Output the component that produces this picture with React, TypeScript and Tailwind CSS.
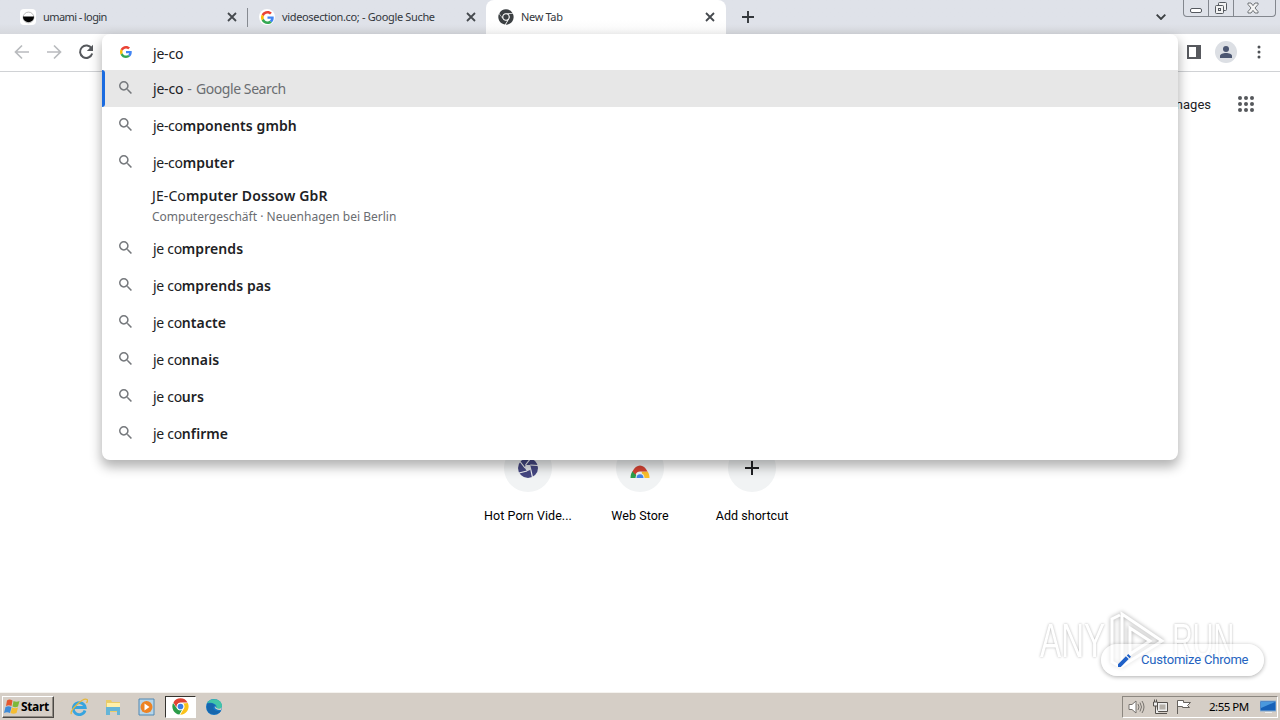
import React from "react";

const sans = "font-['Noto_Sans','Liberation_Sans',sans-serif]";

function GoogleG({ className }: { className: string }) {
  return (
    <svg viewBox="0 0 48 48" className={className}>
      <path fill="#EA4335" d="M24 9.5c3.54 0 6.71 1.22 9.21 3.6l6.85-6.85C35.9 2.38 30.47 0 24 0 14.62 0 6.51 5.38 2.56 13.22l7.98 6.19C12.43 13.72 17.74 9.5 24 9.5z" />
      <path fill="#4285F4" d="M46.98 24.55c0-1.57-.15-3.09-.38-4.55H24v9.02h12.94c-.58 2.96-2.26 5.48-4.78 7.18l7.73 6c4.51-4.18 7.09-10.36 7.09-17.65z" />
      <path fill="#FBBC05" d="M10.53 28.59c-.48-1.45-.76-2.99-.76-4.59s.27-3.14.76-4.59l-7.98-6.19C.92 16.46 0 20.12 0 24c0 3.88.92 7.54 2.56 10.78l7.97-6.19z" />
      <path fill="#34A853" d="M24 48c6.48 0 11.93-2.13 15.89-5.81l-7.73-6c-2.15 1.45-4.92 2.3-8.16 2.3-6.26 0-11.57-4.22-13.47-9.91l-7.98 6.19C6.51 42.62 14.62 48 24 48z" />
    </svg>
  );
}

function Cross() {
  return (
    <svg viewBox="0 0 10 10" className="size-[10px] shrink-0" stroke="#45494e" strokeWidth="1.8">
      <path d="M1 1l8 8M9 1L1 9" />
    </svg>
  );
}

function Lens() {
  return (
    <svg viewBox="3 3 17.5 17.5" className="size-[13px] shrink-0" fill="#75787c">
      <path d="M15.5 14h-.79l-.28-.27A6.471 6.471 0 0 0 16 9.5 6.5 6.5 0 1 0 9.5 16c1.61 0 3.09-.59 4.23-1.57l.27.28v.79l5 4.99L20.49 19l-4.99-5zm-6 0C7.01 14 5 11.99 5 9.5S7.01 5 9.5 5 14 7.01 14 9.5 11.99 14 9.5 14z" />
    </svg>
  );
}

function ChromeMark({ className, mono = false }: { className: string; mono?: boolean }) {
  const c = mono ? ["#3c4043", "#3c4043", "#3c4043"] : ["#e04434", "#fbc21a", "#2b9c49"];
  return (
    <svg viewBox="0 0 24 24" className={className}>
      <circle cx="12" cy="12" r="11.5" fill="#fff" />
      <path fill={c[0]} d="M2 6.2A11.5 11.5 0 0 1 22 6.5H12A5.5 5.5 0 0 0 6.6 13.6z" />
      <path fill={c[1]} d="M22.3 7A11.5 11.5 0 0 1 11.6 23.5L17 14.5A5.5 5.5 0 0 0 15.6 7.9z" />
      <path fill={c[2]} d="M1.5 7.2A11.5 11.5 0 0 0 10.4 23.4L14 17.1A5.5 5.5 0 0 1 7 14.8z" />
      <circle cx="12" cy="12" r="5" fill="#fff" />
      <circle cx="12" cy="12" r="4" fill={mono ? "#3c4043" : "#3b7de4"} />
    </svg>
  );
}

function TabStrip() {
  return (
    <div className="flex h-[34px] shrink-0 bg-linear-to-b from-[#dfe2e9] from-70% to-[#d6d8dd] text-[11px] text-[#33373c]">
      <div className="flex w-[247px] items-center pr-[10px] pl-5">
        <span className="flex size-4 shrink-0 items-center justify-center rounded-sm bg-white">
          <svg viewBox="0 0 14 14" className="size-[13px]">
            <circle cx="7" cy="7" r="5.8" fill="#fff" stroke="#999" strokeWidth=".7" />
            <path d="M1 6h12a6 6 0 0 1-12 0z" fill="#050505" />
          </svg>
        </span>
        <span className="ml-[7px] flex-1 whitespace-nowrap tracking-[-0.6px]">umami - login</span>
        <Cross />
      </div>
      <div className="mt-2 h-[19px] w-px bg-[#868a91]" />
      <div className="flex w-[238px] items-center rounded-br-[8px] pr-[10px] pl-[11px]">
        <span className="flex size-4 shrink-0 items-center justify-center rounded-full bg-white">
          <GoogleG className="size-[13px]" />
        </span>
        <span className="ml-[7px] flex-1 whitespace-nowrap tracking-[-0.34px]">videosection.co; - Google Suche</span>
        <Cross />
      </div>
      <div className="flex w-[240px] items-center rounded-t-[8px] bg-linear-to-b from-white from-60% to-[#f8f8f8] pr-[11px] pl-[12px]">
        <ChromeMark mono className="size-[16px] shrink-0" />
        <span className="ml-[7px] flex-1 tracking-[-0.35px]">New Tab</span>
        <Cross />
      </div>
      <div className="flex w-[44px] items-center justify-center">
        <svg viewBox="0 0 12 12" className="size-3" stroke="#33373b" strokeWidth="1.9"><path d="M6 0v12M0 6h12" /></svg>
      </div>
      <div className="flex flex-1 items-center justify-end pr-[17px]">
        <svg viewBox="0 0 10 6" className="h-[6px] w-[10px]" fill="none" stroke="#3c4043" strokeWidth="1.9"><path d="M.7.7L5 5 9.3.7" /></svg>
      </div>
      <div className="mr-[4px] flex h-[17px] w-[93px] rounded-b-[4px] border border-t-0 border-[#83878e]">
        <div className="flex w-[25px] items-end justify-center border-r border-[#83878e] pb-[3px]">
          <div className="h-[5px] w-[12px] rounded-xs border border-[#55595f] bg-white" />
        </div>
        <div className="flex w-[25px] items-center justify-center border-r border-[#83878e]">
          <svg viewBox="0 0 14 14" className="size-[14px]" fill="#f2f2f2" stroke="#55595f"><rect x="4.5" y="1.500" width="8" height="8" rx="1" /><rect x="1.500" y="4.500" width="8" height="8" rx="1" /><rect x="4.500" y="7.500" width="2" height="2" /></svg>
        </div>
        <div className="flex flex-1 items-center justify-center pr-[3px]">
          <svg viewBox="0 0 12 12" className="size-[12px]" fill="#f4f4f4" stroke="#606469" strokeWidth=".9"><path d="M1 1h3l2 2.6L8 1h3v1.500L8 6l3 3.500V11H8L6 8.400 4 11H1V9.500L4 6 1 2.500z" /></svg>
        </div>
      </div>
    </div>
  );
}

function Toolbar() {
  return (
    <div className="flex h-[38px] shrink-0 items-center border-b border-[#d0d2d5] bg-white pr-[15px] pb-px pl-[14px]">
      <svg viewBox="0 0 16 16" className="size-4" fill="none" stroke="#b9bbbe" strokeWidth="1.7"><path d="M15 8H2M8 1.500L1.500 8 8 14.500" /></svg>
      <svg viewBox="0 0 16 16" className="ml-4 size-4" fill="none" stroke="#b9bbbe" strokeWidth="1.7"><path d="M1 8h13M8 1.500L14.500 8 8 14.500" /></svg>
      <svg viewBox="0 0 16 16" className="ml-4 size-4" fill="none" stroke="#55585c" strokeWidth="2"><path d="M13.600 4.600A6.200 6.200 0 1 0 14.200 9.500" /><path d="M15 .8v6.200H8.800z" fill="#55585c" stroke="none" /></svg>
      <div className="flex-1" />
      <svg viewBox="0 0 14 14" className="h-[14px] w-[14px]"><path d="M0 0h14v14H0zM2 2v10h7V2z" fill="#57595e" fillRule="evenodd" /></svg>
      <span className="ml-[14px] flex size-[22px] items-center justify-center rounded-full bg-[#dcdfe4]">
        <svg viewBox="0 0 12 12" className="size-3" fill="#4b5671"><circle cx="6" cy="3" r="3" /><path d="M0 12V10c0-2 3-3 6-3s6 1 6 3v2z" /></svg>
      </span>
      <svg viewBox="0 0 4 14" className="mr-[4px] ml-[20px] h-[14px] w-[4px]" fill="#4e5155"><circle cx="2" cy="2" r="1.500" /><circle cx="2" cy="7" r="1.500" /><circle cx="2" cy="12" r="1.500" /></svg>
    </div>
  );
}

const dashed = [
  { light: "je-co", bold: "mponents gmbh" },
  { light: "je-co", bold: "mputer" },
];
const spaced = [
  { light: "je co", bold: "mprends" },
  { light: "je co", bold: "mprends pas" },
  { light: "je co", bold: "ntacte" },
  { light: "je co", bold: "nnais" },
  { light: "je co", bold: "urs" },
  { light: "je co", bold: "nfirme" },
];

function Match({ light, bold }: { light: string; bold: string }) {
  return (
    <div className="flex h-[37px] items-center pb-[2px] pl-[17px]">
      <Lens />
      <span className="ml-[21px] pt-[2px] text-[14px] whitespace-pre text-[#202124]">
        <span className="tracking-[-0.3px]">{light}</span>
        <span className="font-semibold tracking-[0.08px]">{bold}</span>
      </span>
    </div>
  );
}

function Suggestions() {
  return (
    <div className="absolute top-[34px] left-[102px] h-[426px] w-[1076px] rounded-[8px] bg-white shadow-[0_6px_12px_1px_rgba(0,0,0,0.30)]">
      <div className="flex h-[36px] items-center pl-[18px]">
        <GoogleG className="size-[12px]" />
        <span className="ml-[21px] pt-[2px] text-[14px] tracking-[-0.2px] text-[#202124]">je-co</span>
      </div>
      <div className="flex h-[37px] items-center bg-[#e7e7e7] pb-[2px]">
        <div className="mt-[2px] h-[37px] w-[3px] rounded-r-sm bg-[#1a6be0]" />
        <div className="w-[14px]" />
        <Lens />
        <span className="ml-[21px] pt-[2px] text-[14px] whitespace-pre text-[#202124]">
          <span className="tracking-[-0.2px]">je-co</span>
          <span className="tracking-[0.3px] text-[#6a6d71]"> - </span>
          <span className="tracking-[-0.42px] text-[#6a6d71]">Google Search</span>
        </span>
      </div>
      {dashed.map((m) => <Match key={m.bold} light={m.light} bold={m.bold} />)}
      <div className="flex h-[49px] flex-col pt-[4px] pl-[50px]">
        <span className="text-[14px] leading-[22px] text-[#202124]">
          <span className="tracking-[0.1px]">JE-Co</span>
          <span className="font-semibold tracking-[0.16px]">mputer Dossow GbR</span>
        </span>
        <span className="text-[12px] leading-[19px] text-[#6a6d71]">Computergeschäft · Neuenhagen bei Berlin</span>
      </div>
      {spaced.map((m) => <Match key={m.bold} light={m.light} bold={m.bold} />)}
    </div>
  );
}

function Shortcut({ label, children }: { label: string; children: React.ReactNode }) {
  return (
    <div className="flex w-[112px] flex-col items-center">
      <div className="flex size-12 items-center justify-center rounded-full bg-[#f1f3f4]">{children}</div>
      <span className="mt-[14px] font-[Roboto,sans-serif] text-[12.5px] leading-[20px] tracking-[0.05px] text-black">{label}</span>
    </div>
  );
}

function NewTabPage() {
  return (
    <div className="relative flex flex-1 flex-col bg-white font-[Roboto,sans-serif]">
      <div className="flex h-[64px] items-center justify-end pr-[26px]">
        <span className="pt-px text-[13px] text-[#202124]">Images</span>
        <svg viewBox="0 0 16 16" className="ml-[27px] size-4" fill="#55585c">
          {[2, 8, 14].map((y) => [2, 8, 14].map((x) => <circle key={`${x}-${y}`} cx={x} cy={y} r="2" />))}
        </svg>
      </div>
      <div className="mt-[308px] flex justify-center">
        <Shortcut label="Hot Porn Vide...">
          <svg viewBox="0 0 20 20" className="size-5">
            <circle cx="10" cy="10" r="10" fill="#454782" />
            <path d="M7.500 7L13 0M12.300 7L20 7.500M12.800 11.500L14.500 19.500M9 13L1 15M7 10L2 3.500" stroke="#f1f3f4" strokeWidth="1.200" />
            <path d="M7.500 7l4.800 0 1 4.500-4.300 1.800L6.800 10z" fill="#e4e6ec" />
          </svg>
        </Shortcut>
        <Shortcut label="Web Store">
          <svg viewBox="0 0 20 12" className="mt-[7px] h-[13px] w-[20px]" preserveAspectRatio="none">
            <path d="M.5 12C.5 8 2 6 3.500 5L8 12z" fill="#2ba04c" />
            <path d="M19.500 12c0-3-1-5-2-6h-6l2 6z" fill="#fbc02d" />
            <path d="M2.500 6C6-1.500 14-1.500 17.500 6H10a5 5 0 0 0-4.500 3z" fill="#d64333" />
            <path d="M5.500 12a4.500 4.500 0 0 1 9 0z" fill="#eef0f2" /><path d="M6.500 12a3.500 3.500 0 0 1 7 0z" fill="#4284ea" />
          </svg>
        </Shortcut>
        <Shortcut label="Add shortcut">
          <svg viewBox="0 0 14 14" className="size-[14px]" stroke="#202124" strokeWidth="2"><path d="M7 0v14M0 7h14" /></svg>
        </Shortcut>
      </div>
      <div className="absolute right-[46px] bottom-[21px] flex items-center font-['Liberation_Sans',sans-serif] text-[48px] leading-[60px] text-white [text-shadow:0_0_3px_rgba(0,0,0,0.32)]">
        <span className="block w-[67px] origin-left scale-x-[0.66]">ANY</span>
        <svg viewBox="0 0 60 60" className="h-[60px] w-[60px] overflow-visible drop-shadow-[0_0_2px_rgba(0,0,0,0.35)]" fill="none" stroke="#fff" strokeWidth="3">
          <path d="M13 4L5 8v43l7 4M15 3l40 27-40 25zM23 17v26l20-13z" />
        </svg>
        <span className="ml-[5px] block w-[62px] origin-left scale-x-[0.6]">RUN</span>
      </div>
      <div className="absolute right-[16px] bottom-[16px] flex h-8 w-[163px] items-center rounded-full bg-white/60 pl-[17px] shadow-[0_1px_4px_rgba(0,0,0,0.32)]">
        <svg viewBox="0 0 14 14" className="size-[13px]" fill="#1f61c8"><path d="M0 14v-3L8.500 2.500l3 3L3 14zM9.500 1.500L11 0l3 3-1.500 1.500z" /></svg>
        <span className="ml-[10px] text-[13px] tracking-[-0.2px] whitespace-nowrap text-[#2463c0]">Customize Chrome</span>
      </div>
    </div>
  );
}

function Taskbar() {
  return (
    <div className={`flex h-[28px] shrink-0 items-center border-t border-[#f5f3ef] bg-[#d5cec6] shadow-[0_-1px_0_#c3beb6] ${sans}`}>
      <div className="ml-[2px] flex h-[22px] w-[52px] items-center border border-t-white border-r-[#4c4945] border-b-[#4c4945] border-l-white pl-px shadow-[inset_-1px_-1px_0_#908b84]">
        <svg viewBox="0 0 16 16" className="size-4">
          <path d="M3 1.500c2-1.500 3.500-1 5.500 0L7.500 7C5.500 6 4 6 2 7z" fill="#e4572e" /><path d="M9.500 2c2 1 4 1 6 0L14 7.500c-2 1-3.500 1-5.500 0z" fill="#7db83a" />
          <path d="M1.500 8c2-1 4-1 6 0l-1.500 6c-2-1-4-1-6 0z" fill="#3e8bd8" /><path d="M8 8.500c2 1 4 1 6 0l-1.500 5.500c-2 1-4 1-6 0z" fill="#f5bd32" />
        </svg>
        <span className="ml-px text-[12px] font-bold tracking-[-0.35px] text-black">Start</span>
      </div>
      <svg viewBox="0 0 18 18" className="ml-[16px] size-[18px]" fill="none">
        <path d="M15 12.500A6 6 0 1 1 15.200 9.500H4" stroke="#37a4df" strokeWidth="2.800" />
        <path d="M1.500 16C-1 13 13-1 17 1.500c.8.600.5 2-.5 3.500" stroke="#e6b83c" strokeWidth="1.300" />
      </svg>
      <svg viewBox="0 0 18 18" className="ml-[16px] size-[18px]">
        <path d="M2 2h5l1 2h8v10H2z" fill="#e9cc69" /><path d="M3 5h13v5H3z" fill="#fff0a9" /><path d="M2 9h14v8h-3v-4H6v4H2z" fill="#65b5d7" />
      </svg>
      <svg viewBox="0 0 18 18" className="ml-[16px] size-[18px]">
        <path d="M1 1h15v16H1z" fill="#b6d5e9" stroke="#5188b2" /><circle cx="8.500" cy="9" r="6" fill="#ed8323" /><path d="M6.500 5.500l5 3.500-5 3.500z" fill="#fff" />
      </svg>
      <div className="ml-[9px] flex h-[22px] w-[31px] items-center justify-center border border-t-[#35332f] border-r-white border-b-white border-l-[#35332f] bg-white">
        <ChromeMark className="size-[17px]" />
      </div>
      <svg viewBox="0 0 18 18" className="ml-[9px] size-[18px]">
        <circle cx="9" cy="9" r="8" fill="#1578c8" />
        <path d="M2 5C5-1 17 0 17 8c0 4-6 4-6 2 2-3-3-6-9-5z" fill="#42c5a8" />
        <path d="M2 6c5-2 8 0 8 2-4 1-1 6 6 5-4 5-13 4-14-2z" fill="#1666ad" />
        <path d="M10 8c-1 2 1 4 6 4l1-3c-2 3-6 2-7-1z" fill="#d5cec6" />
      </svg>
      <div className="flex-1" />
      <div className="mr-[2px] flex h-[22px] w-[156px] items-center border border-t-[#8c8780] border-r-white border-b-white border-l-[#8c8780] pl-[5px]">
        <svg viewBox="0 0 17 16" className="h-[16px] w-[17px]" fill="none" stroke="#77736e"><path d="M1 5.500h3L8 2v12l-4-3.500H1z" fill="#fff" /><path d="M10 5q2 3 0 6M12 3.500q3 4.500 0 9M14 2q4 6 0 12" /></svg>
        <svg viewBox="0 0 16 16" className="ml-[7px] size-4" fill="#eee" stroke="#55514d"><path d="M5.500 3.500h10v9h-10zM7 14.500h8" /><path d="M7.500 5.500h6v5h-6z" fill="#b5b0a9" stroke="none" /><path d="M1.500 3h4v4h-4zM2.500 .5v2.500M4.500 .5v2.500M3.500 7v7.500H7" /></svg>
        <svg viewBox="0 0 16 16" className="ml-[8px] size-4" fill="#fff" stroke="#66625d"><path d="M1.500 15V1.500h6v2h7l-3 3 2 2h-7v-1h-5" /></svg>
        <span className="ml-[17px] text-[11.5px] tracking-[-0.5px] whitespace-nowrap text-black">2:55 PM</span>
        <svg viewBox="0 0 16 16" className="mr-px ml-auto h-4 w-4"><path d="M0 2h16v10H0z" fill="#1761b8" stroke="#8bb0d5" /><path d="M1 3h14L1 9z" fill="#4a98dd" /><path d="M5 13h7v1H5z" fill="#eee" /></svg>
      </div>
    </div>
  );
}

export default function App() {
  return (
    <div className={`relative flex h-[720px] w-[1280px] flex-col overflow-hidden bg-white ${sans}`}>
      <TabStrip />
      <Toolbar />
      <NewTabPage />
      <Taskbar />
      <Suggestions />
    </div>
  );
}
